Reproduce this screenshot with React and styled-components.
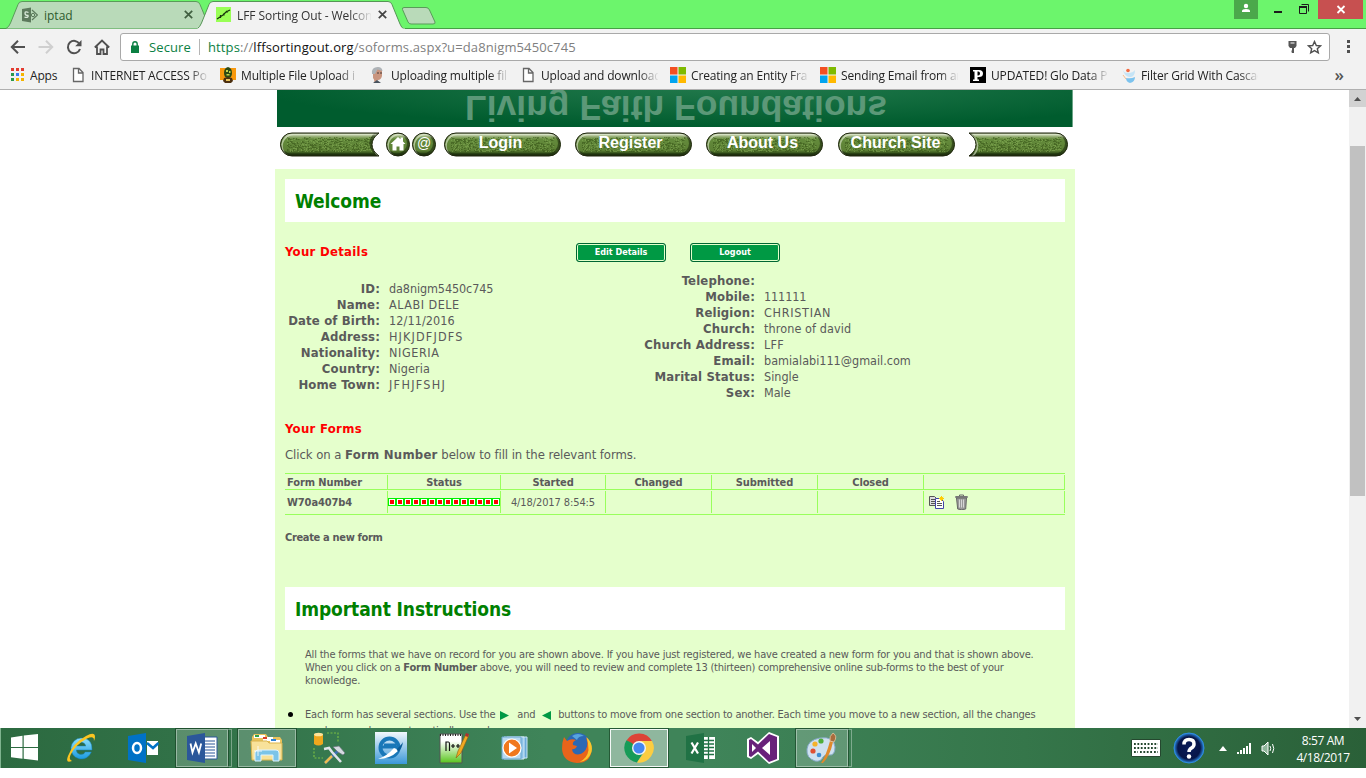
import React from "react";
import styled, { createGlobalStyle, css } from "styled-components";

const Global = createGlobalStyle`
  * { box-sizing: border-box; }
  html, body { margin: 0; padding: 0; background: #fff; overflow: hidden; }
  p, h1, h2 { margin: 0; }
`;

const ui = `"Open Sans", "Noto Sans", sans-serif`;
const tahoma = `"DejaVu Sans Condensed", "DejaVu Sans", sans-serif`;
const verdana = `"DejaVu Sans", sans-serif`;

const Screen = styled.div`
  width: 1366px;
  height: 768px;
  display: flex;
  flex-direction: column;
  overflow: hidden;
`;

/* ---------- browser chrome ---------- */
const TabStrip = styled.div`
  position: relative;
  height: 29px;
  flex: none;
  display: flex;
  background: #6cf56c;
  border-bottom: 1px solid #46a046;
`;
const TabShapes = styled.svg`
  position: absolute;
  left: 0;
  top: 0;
`;
const Tab = styled.div`
  position: relative;
  display: flex;
  align-items: center;
  height: 29px;
  width: ${(p) => p.$w}px;
  padding-left: 22px;
  font: 12px ${ui};
  color: ${(p) => (p.$active ? "#333" : "#2e5a2e")};
`;
const TabTitle = styled.span`
  width: ${(p) => p.$w}px;
  margin: 1px 7px 0 6px;
  letter-spacing: ${(p) => p.$ls || 0}px;
  overflow: hidden;
  white-space: nowrap;
  mask-image: ${(p) => (p.$fade ? "linear-gradient(90deg,#000 84%,transparent 101%)" : "none")};
`;
const WindowControls = styled.div`
  position: relative;
  display: flex;
  margin-left: auto;
  margin-right: 3px;
`;
const WinButton = styled.div`
  height: 19px;
  width: ${(p) => p.$w}px;
  background: ${(p) => p.$bg || "none"};
  svg { display: block; }
`;
const Toolbar = styled.div`
  height: 33px;
  flex: none;
  display: flex;
  align-items: center;
  padding: 3px 7px 0 9px;
  background: #f2f2f2;
`;
const ToolIcon = styled.svg`
  flex: none;
  display: block;
  margin-right: ${(p) => p.$mr || 0}px;
`;
const Omnibox = styled.div`
  width: 1210px;
  height: 28px;
  display: flex;
  align-items: center;
  border: 1px solid #a9a9a9;
  border-radius: 3px;
  background: #fff;
  padding: 0 7px 0 10px;
  font: 13px ${ui};
  color: #808080;
`;
const Secure = styled.span`
  color: #0b8043;
  width: 51px;
  margin-left: 10px;
  border-right: 1px solid #b5b5b5;
  line-height: 16px;
  letter-spacing: 0.1px;
`;
const Url = styled.span`
  margin-left: 8px;
  letter-spacing: 0.12px;
  flex: 1;
  b { font-weight: 400; color: #111; }
  i { font-style: normal; color: #0b8043; }
`;
const Bookmarks = styled.div`
  height: 28px;
  flex: none;
  display: flex;
  align-items: center;
  padding: 0 22px 1px 9px;
  background: #f2f2f2;
  border-bottom: 1px solid #b0b0b0;
  font: 12px ${ui};
  color: #222;
`;
const Bookmark = styled.div`
  display: flex;
  align-items: center;
  width: ${(p) => p.$w || 150}px;
  flex: none;
  svg { flex: none; }
`;
const BookmarkText = styled.span`
  margin-left: 5px;
  width: 117px;
  overflow: hidden;
  white-space: nowrap;
  letter-spacing: -0.16px;
  mask-image: ${(p) => (p.$plain ? "none" : "linear-gradient(90deg,#000 84%,transparent 101%)")};
`;
const More = styled.span`
  margin-left: auto;
  font-size: 17px;
  line-height: 16px;
  font-weight: 600;
  color: #555;
`;

/* ---------- page ---------- */
const Viewport = styled.div`
  height: 638px;
  flex: none;
  display: flex;
  overflow: hidden;
  background: #fff;
`;
const Page = styled.main`
  width: 1349px;
  height: 638px;
  padding-left: 275px;
  overflow: hidden;
  color: #5a5a5a;
`;
const Banner = styled.div`
  width: 796px;
  height: 37px;
  margin-left: 2px;
  overflow: hidden;
  background: radial-gradient(ellipse 60% 110% at 57% -10%, #237a4d, rgba(0,92,46,0)), #005c2e;
  border-right: 1px solid #6ba587;
`;
const Mirrored = styled.div`
  padding-left: 188px;
  font: bold 35.5px/40px "Liberation Sans", Arial, sans-serif;
  white-space: nowrap;
  color: #5c9878;
  transform: translateY(-2px) scaleY(-1);
`;
const Nav = styled.nav`
  display: flex;
  height: 42px;
  padding: 5px 0 0 5px;
`;
const NavItem = styled.div`
  position: relative;
  width: ${(p) => p.$w}px;
  height: 25px;
  margin-right: ${(p) => p.$gap}px;
  text-align: center;
  color: #fff;
  font: bold ${(p) => p.$size || 16}px/21px "Liberation Sans", Arial, sans-serif;
`;
const NavArt = styled.svg`
  position: absolute;
  left: 0;
  top: 0;
`;
const NavLabel = styled.span`
  position: relative;
  left: ${(p) => p.$dx || 0}px;
  top: ${(p) => p.$dy || 0}px;
  font-weight: ${(p) => (p.$light ? 400 : 700)};
`;
const Panel = styled.section`
  width: 800px;
  height: 620px;
  padding: 10px;
  background: #e5ffcc;
`;
const Title = styled.h1`
  height: 43px;
  padding-left: 10px;
  background: #fff;
  color: #008000;
  font: bold 19px/44px ${tahoma};
  letter-spacing: -0.1px;
`;
const DetailHead = styled.div`
  display: flex;
  align-items: center;
  height: 60px;
`;
const SubTitle = styled.h2`
  color: #f00;
  font: bold 13px/16px ${tahoma};
  letter-spacing: 0.3px;
  width: ${(p) => p.$w || "auto"};
`;
const Button = styled.button`
  width: 90px;
  height: 19px;
  margin: 1px 24px 0 0;
  padding: 0;
  border: 1px solid #006633;
  border-radius: 3px;
  background: #009944;
  box-shadow: inset 0 0 0 1px #e5ffcc;
  color: #fff;
  font: bold 9px/17px ${tahoma};
`;
const Details = styled.div`
  display: flex;
  height: 139px;
`;
const Column = styled.dl`
  display: grid;
  grid-template-columns: ${(p) => p.$label}px auto;
  grid-auto-rows: 16px;
  align-content: start;
  column-gap: 9px;
  width: ${(p) => p.$w}px;
  margin: ${(p) => p.$top}px 0 0;
  font: 12.5px/16px ${tahoma};
  white-space: nowrap;
`;
const Term = styled.dt`
  font-weight: bold;
  font-size: 13px;
  text-align: right;
  letter-spacing: 0.15px;
`;
const Value = styled.dd`
  margin: 0;
  letter-spacing: ${(p) => p.$ls || 0}px;
`;
const Intro = styled.p`
  margin-top: 10px;
  font: 13px/16px ${tahoma};
  letter-spacing: -0.07px;
  b { letter-spacing: 0.25px; }
`;
const Table = styled.div`
  margin-top: 10px;
  border-top: 1px solid #99ff5c;
  font: 11px ${tahoma};
`;
const Row = styled.div`
  display: grid;
  grid-template-columns: 103px 113px 105px 106px 106px 106px 141px;
  height: ${(p) => p.$h}px;
  padding: 1px 0;
  border-bottom: 1px solid #99ff5c;
`;
const Cell = styled.div`
  display: flex;
  align-items: center;
  justify-content: ${(p) => (p.$left ? "flex-start" : "center")};
  padding-left: ${(p) => p.$pl || 0}px;
  padding-top: ${(p) => p.$pt || 0}px;
  border-right: 1px solid #99ff5c;
  font-weight: ${(p) => (p.$bold ? "bold" : "normal")};
  white-space: nowrap;
  letter-spacing: -0.1px;
`;
const Pip = styled.i`
  width: 8px;
  height: 8px;
  flex: none;
  border: 1px solid #00f000;
  background: #f00;
  box-shadow: inset 0 0 0 1px #fff;
`;
const CopyIcon = styled.svg`
  margin-right: 10px;
`;
const CreateLink = styled.p`
  margin: 15px 0 42px;
  font: bold 11px/15px ${tahoma};
  letter-spacing: -0.33px;
`;
const Text = styled.p`
  margin: 18px 0 0 20px;
  font: 11px/13px ${tahoma};
  white-space: nowrap;
`;
const Bullets = styled.ul`
  margin: 20px 0 0;
  padding-left: 20px;
  font: 11px/16px ${tahoma};
  white-space: nowrap;
  list-style: none;
  li { position: relative; }
  li::before {
    content: "";
    position: absolute;
    left: -17px;
    top: 5px;
    width: 5px;
    height: 5px;
    border-radius: 50%;
    background: #000;
  }
`;
const Arrow = styled.svg`
  margin: 0 ${(p) => p.$r}px 0 ${(p) => p.$l}px;
  vertical-align: -2px;
`;
const Line = styled.span`
  display: block;
  letter-spacing: ${(p) => p.$ls || 0}px;
`;

const Scrollbar = styled.div`
  width: 17px;
  height: 638px;
  display: flex;
  flex-direction: column;
  background: #f1f1f1;
`;
const ScrollButton = styled.div`
  height: 17px;
  background: ${(p) => (p.$on ? "#d2d2d2" : "#f1f1f1")};
  svg { display: block; }
`;
const Thumb = styled.div`
  margin: 39px 1px auto;
  height: 350px;
  background: #c1c1c1;
`;

/* ---------- taskbar ---------- */
const Taskbar = styled.footer`
  height: 40px;
  flex: none;
  display: flex;
  background: linear-gradient(90deg, #2c6a40 0, #33744a 18%, #3f8459 40%, #3f8459 52%, #35764a 75%, #2a6038 100%);
`;
const frame = css`
  border: 1px solid rgba(255, 255, 255, ${(p) => (p.$frame === "active" ? 0.9 : 0.38)});
  box-shadow: 0 0 0 1px rgba(20, 60, 32, 0.6);
  background: rgba(255, 255, 255, ${(p) => (p.$frame === "active" ? 0.42 : 0.2)});
`;
const Slot = styled.div`
  width: 62px;
  display: flex;
  padding: 1px ${(p) => (p.$stack ? 4 : 2)}px 1px 2px;
`;
const SlotInner = styled.div`
  flex: 1;
  display: flex;
  align-items: center;
  justify-content: center;
  ${(p) => p.$frame && frame}
`;
const Stack = styled.div`
  width: 4px;
  border: 1px solid rgba(255, 255, 255, 0.35);
  border-left: 0;
`;
const Start = styled.div`
  width: 50px;
  padding: 6px 0 0 10px;
  border-left: 1px solid #7fb38f;
`;
const Tray = styled.div`
  margin-left: auto;
  display: flex;
  align-items: center;
`;
const Clock = styled.div`
  width: 74px;
  margin: 1px 6px 0 7px;
  text-align: center;
  color: #fff;
  font: 12px/17px ${ui};
  letter-spacing: -0.4px;
`;

/* ---------- nav pieces ---------- */
const pillPaths = {
  left: "M12 1H99Q92 6 92 12.5T99 24H12A11.5 11.5 0 0 1 12 1Z",
  right: "M87 1H0Q7 6 7 12.5T0 24H87A11.5 11.5 0 0 0 87 1Z",
  full: "M12 1H105A11.5 11.5 0 0 1 105 24H12A11.5 11.5 0 0 1 12 1Z",
  round: "M12 1A11.5 11.5 0 0 1 12 24A11.5 11.5 0 0 1 12 1Z",
};

/* deterministic light and dark grains for the mossy button surface */
function grains(w) {
  const dark = [];
  const light = [];
  let s = 7;
  const next = () => {
    s = (s * 16807) % 2147483647;
    return s / 2147483647;
  };
  for (let y = 5; y < 20; y += 1) {
    for (let x = 7; x < w - 7; x += 1) {
      const r = next();
      if (r < 0.2) dark.push(`M${x} ${y}h1.500v1h-1.500z`);
      else if (r > 0.82) light.push(`M${x} ${y}h1v1h-1z`);
    }
  }
  return [dark.join(""), light.join("")];
}

function PillArt({ kind, w }) {
  const d = pillPaths[kind];
  const id = `clip-${kind}`;
  const [dark, light] = grains(w);
  return (
    <NavArt width={w + 1} height="25" viewBox={`0 0 ${w + 1} 25`}>
      <defs>
        <clipPath id={id}><path d={d} /></clipPath>
        <linearGradient id={`${id}-g`} x1="0" y1="0" x2="0" y2="1">
          <stop offset="0" stopColor="#d5e3bd" />
          <stop offset=".12" stopColor="#a9bc8c" />
          <stop offset=".26" stopColor="#648b3c" />
          <stop offset=".76" stopColor="#5c8034" />
          <stop offset=".88" stopColor="#33501a" />
          <stop offset="1" stopColor="#172409" />
        </linearGradient>
      </defs>
      <path d={d} fill={`url(#${id}-g)`} />
      <g clipPath={`url(#${id})`}>
        {kind !== "round" && (
          <>
            <path d={dark} fill="#304c12" opacity=".5" />
            <path d={light} fill="#8cb45c" opacity=".45" />
          </>
        )}
        <path d={d} fill="none" stroke="#1b2a0c" strokeWidth="3" opacity=".6" transform="translate(-1 -1)" />
        <path d={d} fill="none" stroke="#e6efd8" strokeWidth="1.600" opacity=".6" transform="translate(1.500 1.500)" />
      </g>
      <path d={d} fill="none" stroke="#20270f" />
    </NavArt>
  );
}

/* ---------- bookmark icons ---------- */
const PageIcon = () => (
  <svg width="16" height="16"><path d="M3.500 1.500h5.500l4 4v9H3.500zM8.500 1.500v4.500h4.500" fill="#fff" stroke="#666" strokeWidth="1.300" /></svg>
);
const MsIcon = () => (
  <svg width="16" height="16"><path d="M0 0h7.500v7.500H0z" fill="#f25022" /><path d="M8.500 0H16v7.500H8.500z" fill="#7fba00" /><path d="M0 8.500h7.500V16H0z" fill="#00a4ef" /><path d="M8.500 8.500H16V16H8.500z" fill="#ffb900" /></svg>
);
const AppsIcon = () => (
  <svg width="16" height="16">
    {["#e33b30", "#e33b30", "#e33b30", "#2b9a4c", "#3c7cf0", "#f4b400", "#2b9a4c", "#f4b400", "#f4b400"].map((c, i) => (
      <rect key={i} x={2 + (i % 3) * 5} y={1 + Math.floor(i / 3) * 5} width="3" height="3" fill={c} />
    ))}
  </svg>
);
const GuyIcon = () => (
  <svg width="16" height="16"><path d="M0 1h16v12H0z" fill="#f8980c" /><path d="M8 0q4 1 4 6t-4 5-4-5 4-6z" fill="#2c4a14" /><path d="M6 3h2v2H6zM9 4h1.500v2H9zM6.500 7h3v1.500h-3z" fill="#c3d44c" /><path d="M4 11l4-1 4 1 1 3-2 2H5l-2-2z" fill="#4d3010" /><path d="M6 12h4v2H6z" fill="#e9c35b" /></svg>
);
const FaceIcon = () => (
  <svg width="16" height="16"><path d="M3 3q5-5 9 0v6q-1 4-4 4l-4 3q1-3-1-5z" fill="#c9957f" /><path d="M2 7q-1-7 6-7 4 0 4.500 4l-5-1.500L5 7z" fill="#aeb3b7" /><path d="M3 16l4-3 4 3z" fill="#49545f" /><path d="M7 6h2M10 6h2" stroke="#4b3a36" /></svg>
);
const PIcon = () => (
  <svg width="16" height="16"><path d="M0 0h16v16H0z" fill="#000" /><path d="M3 3h6q4 0 4 3.500T9 10H7.500v2.500H9V14H3v-1.500h1.500v-8H3zM7.500 4.500v4q2.500.5 2.500-2t-2.500-2z" fill="#fff" /></svg>
);
const BirdIcon = () => (
  <svg width="16" height="16"><path d="M2 1q1 5 6 5t7-3q0 6-4 7-6 1-9-9z" fill="#c5e4f6" /><path d="M6 11q5 1 9-1 0 5-5 6-4-1-4-5z" fill="#7cc3ee" /><circle cx="8" cy="3.500" r="1.800" fill="#f26a42" /><path d="M3 8l3 4" stroke="#f5bd8f" /></svg>
);
const bookmarks = [
  [PageIcon, "INTERNET ACCESS Po"],
  [GuyIcon, "Multiple File Upload i"],
  [FaceIcon, "Uploading multiple fil"],
  [PageIcon, "Upload and download"],
  [MsIcon, "Creating an Entity Fra"],
  [MsIcon, "Sending Email from ar"],
  [PIcon, "UPDATED! Glo Data P"],
  [BirdIcon, "Filter Grid With Cascad"],
];

/* ---------- taskbar icons ---------- */
const IeIcon = () => (
  <svg width="32" height="32" viewBox="0 0 32 32">
    <defs><linearGradient id="ie" x2="0" y2="1"><stop stopColor="#8fe0fb" /><stop offset="1" stopColor="#1c9be0" /></linearGradient></defs>
    <path d="M16 6a10.500 10.500 0 1 0 10.300 14h-6a4.800 4.800 0 0 1-9-2H27q.5-12-11-12zm-4.700 8a4.900 4.900 0 0 1 9.500 0z" fill="url(#ie)" stroke="#1580bd" strokeWidth=".5" />
    <path d="M7 29q-7 3-4-5Q8 11 21 4q9-5 9 1 0 2-1.200 4.500Q30 3 22 6.500 10 13 5.500 23q-2 5 1.500 6z" fill="#fcc521" />
  </svg>
);
const OutlookIcon = () => (
  <svg width="32" height="32" viewBox="0 0 32 32"><path d="M1 4l18-3v30L1 28z" fill="#0072c6" /><path d="M20 9h11v14H20z" fill="#fff" /><path d="M20 11l6 5 5.500-5" fill="none" stroke="#0072c6" strokeWidth="2.500" /><ellipse cx="10" cy="16" rx="4" ry="5" fill="none" stroke="#fff" strokeWidth="2.500" /></svg>
);
const WordIcon = () => (
  <svg width="32" height="32" viewBox="0 0 32 32"><path d="M17 5h14v22H17z" fill="#fff" stroke="#2b579a" /><path d="M19 9h10M19 12h10M19 15h10M19 18h10M19 21h10M19 24h10" stroke="#2b579a" strokeWidth="1.200" /><path d="M1 4l18-3v30L1 28z" fill="#2b579a" /><path d="M4.500 11.500l2 9 3.200-9 3.200 9 2.300-9" fill="none" stroke="#fff" strokeWidth="1.800" /></svg>
);
const FolderIcon = () => (
  <svg width="34" height="32" viewBox="0 0 34 32"><path d="M2 5l2-3h12l2 3h12l2 3v19H2z" fill="#e9c25c" /><path d="M4 3h11v3H4z" fill="#fff" /><path d="M5 3h4v2H5z" fill="#30a34a" /><path d="M13 5h10v4H13z" fill="#fff" /><path d="M13 5h4v2h-4z" fill="#d9402b" /><path d="M20 8h10v3H20z" fill="#fff" /><path d="M21 7h5v2h-5z" fill="#2d82d6" /><path d="M1 9h16l2 2h13v17H2z" fill="#f8e29a" stroke="#d9b44d" /><path d="M5 29v-8q0-3 3-3h18q3 0 3 3v8h-6v-6H11v6z" fill="#7cc4e8" stroke="#dff4ff" /><path d="M8 14v10M4 19h8" stroke="#fff" opacity=".8" /></svg>
);
const ToolsIcon = () => (
  <svg width="32" height="32" viewBox="0 0 32 32"><path d="M1 2h9v10q-4.500 3-9 0z" fill="#efa71d" /><ellipse cx="5.500" cy="2.500" rx="4.500" ry="1.800" fill="#ffe49a" /><path d="M14 1h11v10M1 16v10h9" fill="none" stroke="#78bd44" strokeWidth="1.200" strokeDasharray="2 1.500" /><path d="M12 31L26 18" stroke="#3c6fae" strokeWidth="3" /><path d="M12 31l7-7" stroke="#edbd50" strokeWidth="2.500" /><path d="M11 17l5-1 3 4 9 10" fill="none" stroke="#dfe3ea" strokeWidth="2.600" /><path d="M20 15l6-1 6 7-2 2-5-3z" fill="#d6dae1" stroke="#6d7480" strokeWidth=".7" /></svg>
);
const BlueIeIcon = () => (
  <svg width="32" height="32" viewBox="0 0 32 32"><defs><linearGradient id="bie" x2="0" y2="1"><stop stopColor="#f2f8fd" /><stop offset="1" stopColor="#3a97d8" /></linearGradient></defs><path d="M0 0h32v32H0z" fill="url(#bie)" /><circle cx="14.500" cy="15.500" r="9" fill="none" stroke="#1977b8" strokeWidth="4" /><path d="M7 15h17M9 13h12" stroke="#1977b8" strokeWidth="3" /><path d="M3 27q9-3 16-11 3 1 4 3-8 8-20 8z" fill="#fff" /><path d="M22 17q5-5 6-7-1 7-5 10z" fill="#0b5c97" /></svg>
);
const NppIcon = () => (
  <svg width="32" height="32" viewBox="0 0 32 32"><defs><linearGradient id="npp" x2="0" y2="1"><stop offset=".25" stopColor="#fff" /><stop offset="1" stopColor="#58c51c" /></linearGradient></defs><path d="M3 2h22v29H3z" fill="url(#npp)" stroke="#555" /><path d="M3 3h22" stroke="#222" strokeWidth="2" strokeDasharray="1 1.500" /><path d="M9 19v-9h2.500q1 0 1 2v7M14 14h4M16 12v4M19 14h4M21 12v4" fill="none" stroke="#111" strokeWidth="1.200" /><path d="M19 26l2-7 8-17 3 1-8 18z" fill="#f0a922" stroke="#8c5c12" strokeWidth=".6" /><path d="M29 1l3 1-1 3-3-1z" fill="#a73333" /></svg>
);
const MediaIcon = () => (
  <svg width="28" height="28" viewBox="0 0 28 28"><path d="M6 3h20v21H6z" fill="#69a9d8" stroke="#cbe6f7" /><path d="M3 3h20v22H3z" fill="#8fc3e8" stroke="#d3eaf8" /><path d="M1 3h19v22H1z" fill="#b8d9f0" stroke="#6aa7d0" /><circle cx="11" cy="14" r="9" fill="#f0781e" stroke="#fff" strokeWidth="1.200" /><path d="M8 8.500l8 5.500-8 5.500z" fill="#fff" /></svg>
);
const FirefoxIcon = () => (
  <svg width="32" height="32" viewBox="0 0 32 32"><circle cx="17" cy="13.500" r="12.500" fill="#2c68b4" /><path d="M11 4q6-4 12 0-6 0-7 4z" fill="#57a4de" /><path d="M3 5l3 4q4-3 9-1-4 2-3 5l4 1q-1 3-5 3.500 1 5 6 5 7-1 9-8 1-5-1-9 5 4 5.500 12Q30 31 16 31 2 30 1 17 1 10 3 5z" fill="#e8641b" /><path d="M25.500 5q7 7 5 15-3 9-12 10 8-4 9-12 0-7-2-13z" fill="#fbc42b" /></svg>
);
const ChromeIcon = () => (
  <svg width="30" height="30" viewBox="0 0 30 30"><path d="M15 15L2.500 7.500A14.700 14.700 0 0 1 28 8.200L15 8z" fill="#dc4437" /><path d="M15 15L2.300 7.500A14.700 14.700 0 0 0 13 29.500l6-9.500z" fill="#179b57" /><path d="M15 8h13a14.700 14.700 0 0 1-15 21.500L21 18z" fill="#fccd41" /><path d="M9 18L2.400 7.300l6 3z" fill="#179b57" /><circle cx="15" cy="15" r="7" fill="#f4f4f4" /><circle cx="15" cy="15" r="5.600" fill="#4587f0" /></svg>
);
const ExcelIcon = () => (
  <svg width="32" height="32" viewBox="0 0 32 32"><path d="M17 5h13v22H17z" fill="#fff" /><path d="M18 8.500h11M18 12h11M18 15.500h11M18 19h11M18 22.500h11M23.500 5v22" stroke="#207245" strokeWidth="1.300" /><path d="M1 4l18-3v30L1 28z" fill="#207245" /><path d="M6.500 10.500l6.500 11M13 10.500l-6.500 11" stroke="#fff" strokeWidth="2.200" /></svg>
);
const VsIcon = () => (
  <svg width="32" height="32" viewBox="0 0 32 32"><path d="M22 0l10 4v24l-10 4-11-10-7 5-4-2V7l4-2 7 5z" fill="#fff" /><path d="M22 2l8 3v22l-8 3-11-10.500L4 25l-2-1V8l2-1 7 5.500z" fill="#68217a" /><path d="M23 9v14l-8-7zM5 12v8l4-4z" fill="#fff" /></svg>
);
const PaintIcon = () => (
  <svg width="32" height="32" viewBox="0 0 32 32"><path d="M14 6q14-2 15 9 0 9-6 8-4-1-6 2-2 5-8 4-9-3-8-12Q2 8 14 6z" fill="#cfe1f0" stroke="#86a9c8" /><circle cx="7" cy="19" r="2.600" fill="#e05032" /><circle cx="9" cy="12" r="2.600" fill="#f5b22b" /><circle cx="15" cy="9" r="2.600" fill="#4fae3c" /><circle cx="13" cy="23" r="2.300" fill="#3f8ed2" /><path d="M15 31Q20 24 24 9l3 1q-3 14-10 21z" fill="#e08a2c" /><path d="M24 9q-1-5 3-8 5 3 1 9z" fill="#a86c3d" stroke="#f0d3aa" strokeWidth=".7" /></svg>
);
const tasks = [
  [IeIcon], [OutlookIcon], [WordIcon, "open", true], [FolderIcon, "open"], [ToolsIcon], [BlueIeIcon],
  [NppIcon], [MediaIcon], [FirefoxIcon], [ChromeIcon, "active"], [ExcelIcon], [VsIcon], [PaintIcon, "open", true],
];

const leftDetails = [
  ["ID:", "da8nigm5450c745", -0.1], ["Name:", "ALABI DELE", 0.5], ["Date of Birth:", "12/11/2016", 0.1], ["Address:", "HJKJDFJDFS", 1.15],
  ["Nationality:", "NIGERIA", 0.6], ["Country:", "Nigeria", 0.1], ["Home Town:", "JFHJFSHJ", 1.3],
];
const rightDetails = [
  ["Telephone:", ""], ["Mobile:", "111111", -0.1], ["Religion:", "CHRISTIAN", 0.7], ["Church:", "throne of david", 0.1],
  ["Church Address:", "LFF", 0.2], ["Email:", "bamialabi111@gmail.com"], ["Marital Status:", "Single"], ["Sex:", "Male"],
];

function DetailColumn({ rows, ...rest }) {
  return (
    <Column {...rest}>
      {rows.map(([k, v, ls]) => (
        <React.Fragment key={k}>
          <Term>{k}</Term>
          <Value $ls={ls}>{v}</Value>
        </React.Fragment>
      ))}
    </Column>
  );
}

function Chrome() {
  return (
    <>
      <TabStrip>
        <TabShapes width="450" height="29">
          <path d="M6 28.500Q9 27 10.500 23L18 4.500Q19 1.500 22 1.500H196Q199 1.500 200 4.500L210 28.500" fill="#b9dab9" stroke="#599b59" />
          <path d="M197 29Q200 27 201.500 23L209 4.500Q210 1.500 213 1.500H388Q391 1.500 392 4.500L400 24Q401.500 28 404 29" fill="#f2f2f2" stroke="#569656" />
          <path d="M197 29H405" stroke="#f2f2f2" />
          <path d="M404 7.500H426Q428.500 7.500 429.500 10L435 22Q435.500 24 433 24H411Q409 24 408 22L402.500 9.500Q402 7.500 404 7.500Z" fill="#b9dab9" stroke="#599b59" />
        </TabShapes>
        <Tab $w={194}>
          <svg width="16" height="16"><path d="M0 2l9-1.500v15L0 14z" fill="#5c7a5c" /><path d="M6.500 5.500Q3 4 3 6.200t3 2.300q1 2.500-3.500 1.600" fill="none" stroke="#d9e9d9" strokeWidth="1.300" /><path d="M10 3l5.500 5-5.500 5" fill="none" stroke="#5c7a5c" strokeWidth="1.200" /><circle cx="11" cy="8" r="1.700" fill="none" stroke="#5c7a5c" /></svg>
          <TabTitle $w={133}>iptad</TabTitle>
          <svg width="9" height="9"><path d="M.8.8l7.400 7.400M8.200.8L.8 8.200" stroke="#405f40" strokeWidth="1.700" /></svg>
        </Tab>
        <Tab $w={200} $active>
          <svg width="15" height="15"><path d="M0 0h15v15H0z" fill="#99ff55" /><path d="M1 12l3-2 3-2 3-3 4-2M4.500 8v3M8 6v2.500M10 4l1.500 1.500" fill="none" stroke="#17330c" strokeWidth="1.200" /></svg>
          <TabTitle $w={134} $fade $ls={-0.07}>LFF Sorting Out - Welcon</TabTitle>
          <svg width="9" height="9"><path d="M.8.8l7.400 7.400M8.200.8L.8 8.200" stroke="#444" strokeWidth="1.700" /></svg>
        </Tab>
        <WindowControls>
          <WinButton $w={24} $bg="#4ba84b"><svg width="24" height="19"><circle cx="12" cy="6" r="2.200" fill="#fff" /><path d="M8 12V11Q8 9 12 9T16 11V12z" fill="#fff" /></svg></WinButton>
          <WinButton $w={60}><svg width="60" height="19"><path d="M16 12h8" stroke="#1b1b1b" strokeWidth="2" /><path d="M41.500 6.500h7v7h-7zM43.500 4.500h7v7" fill="none" stroke="#1b1b1b" /><path d="M41 7h8" stroke="#1b1b1b" strokeWidth="2" /></svg></WinButton>
          <WinButton $w={45} $bg="#c75050"><svg width="45" height="19"><path d="M19.500 6l7 7M26.500 6l-7 7" stroke="#fff" strokeWidth="1.800" /></svg></WinButton>
        </WindowControls>
      </TabStrip>
      <Toolbar>
        <ToolIcon width="18" height="18" $mr={10}><path d="M16 9H3M9 2.800L2.800 9 9 15.200" fill="none" stroke="#505050" strokeWidth="2" /></ToolIcon>
        <ToolIcon width="18" height="18" $mr={10}><path d="M1.500 9h13M9 2.800L15.200 9 9 15.200" fill="none" stroke="#cfcfcf" strokeWidth="2" /></ToolIcon>
        <ToolIcon width="18" height="18" $mr={10}><path d="M14.500 6A6.200 6.200 0 1 0 15 11" fill="none" stroke="#505050" strokeWidth="2" /><path d="M16.500 2v6.300h-6.300z" fill="#505050" /></ToolIcon>
        <ToolIcon width="18" height="18" $mr={9}><path d="M1.800 9.500L9 2.500l7.200 7M4 8.500V16h3.500v-4.500h3V16H14V8.500" fill="none" stroke="#505050" strokeWidth="1.800" /></ToolIcon>
        <Omnibox>
          <svg width="8" height="12"><path d="M0 4.500h8V12H0z" fill="#0b8043" /><path d="M1.800 5V3q0-2.200 2.200-2.200T6.200 3v2" fill="none" stroke="#0b8043" strokeWidth="1.400" /></svg>
          <Secure>Secure</Secure>
          <Url><i>https</i>://<b>lffsortingout.org</b>/soforms.aspx?u=da8nigm5450c745</Url>
          <ToolIcon width="9" height="14" $mr={10}><path d="M.5 1h8v5l-1.500 2H2L.5 6z" fill="#555" /><path d="M2.500 3h4" stroke="#fff" /><path d="M5 8v5M3.500 11.500H5" stroke="#555" strokeWidth="2" /></ToolIcon>
          <ToolIcon width="15" height="15" viewBox="0 0 15 15"><path d="M7.500 1.500l1.800 4 4.200.4-3.200 2.800 1 4.200-3.800-2.300-3.800 2.300 1-4.200L1.500 5.900l4.200-.4z" fill="none" stroke="#505050" strokeWidth="1.400" /></ToolIcon>
        </Omnibox>
        <ToolIcon width="20" height="14"><path d="M17 0h3v3h-3zM17 5h3v3h-3zM17 10h3v3h-3z" fill="#505050" /></ToolIcon>
      </Toolbar>
      <Bookmarks>
        <Bookmark $w={61}><AppsIcon /><BookmarkText $plain>Apps</BookmarkText></Bookmark>
        {bookmarks.map(([Icon, label], i) => (
          <Bookmark key={i}><Icon /><BookmarkText>{label}</BookmarkText></Bookmark>
        ))}
        <More>»</More>
      </Bookmarks>
    </>
  );
}

function Website() {
  return (
    <Page>
      <Banner><Mirrored>Living Faith Foundations</Mirrored></Banner>
      <Nav>
        <NavItem $w={99} $gap={7}><PillArt kind="left" w={99} /></NavItem>
        <NavItem $w={24} $gap={2}><PillArt kind="round" w={24} /><NavArt width="24" height="25"><path d="M4.500 12L12 5l2.500 2.300V5.500h2.500v4l2.500 2.500H17.500v6.500h-4v-4h-3v4h-4V12z" fill="#fff" /></NavArt></NavItem>
        <NavItem $w={24} $gap={8} $size={14}><PillArt kind="round" w={24} /><NavLabel $dy={1} $light>@</NavLabel></NavItem>
        <NavItem $w={117} $gap={14}><PillArt kind="full" w={117} /><NavLabel $dx={-2}>Login</NavLabel></NavItem>
        <NavItem $w={117} $gap={14}><PillArt kind="full" w={117} /><NavLabel $dx={-3}>Register</NavLabel></NavItem>
        <NavItem $w={117} $gap={15}><PillArt kind="full" w={117} /><NavLabel $dx={-2}>About Us</NavLabel></NavItem>
        <NavItem $w={117} $gap={14}><PillArt kind="full" w={117} /><NavLabel $dx={-1}>Church Site</NavLabel></NavItem>
        <NavItem $w={99} $gap={0}><PillArt kind="right" w={99} /></NavItem>
      </Nav>
      <Panel>
        <Title>Welcome</Title>
        <DetailHead>
          <SubTitle $w="291px">Your Details</SubTitle>
          <Button>Edit Details</Button>
          <Button>Logout</Button>
        </DetailHead>
        <Details>
          <DetailColumn rows={leftDetails} $label={95} $w={355} $top={-1} />
          <DetailColumn rows={rightDetails} $label={115} $w={425} $top={-9} />
        </Details>
        <SubTitle>Your Forms</SubTitle>
        <Intro>Click on a <b>Form Number</b> below to fill in the relevant forms.</Intro>
        <Table>
          <Row $h={16}>
            <Cell $left $pl={2} $pt={1} $bold>Form Number</Cell>
            <Cell $pt={1} $bold>Status</Cell>
            <Cell $pt={1} $bold>Started</Cell>
            <Cell $pt={1} $bold>Changed</Cell>
            <Cell $pt={1} $bold>Submitted</Cell>
            <Cell $pt={1} $bold>Closed</Cell>
            <Cell />
          </Row>
          <Row $h={25}>
            <Cell $left $pl={2} $bold>W70a407b4</Cell>
            <Cell>{Array.from({ length: 14 }, (_, i) => <Pip key={i} />)}</Cell>
            <Cell>4/18/2017 8:54:5</Cell>
            <Cell />
            <Cell />
            <Cell />
            <Cell $left $pl={5}>
              <CopyIcon width="16" height="16"><path d="M.5 2.500h5l2 2v7h-7z" fill="#ddd" stroke="#555" /><path d="M2 5.500h4M2 7.500h4M2 9.500h4" stroke="#555" /><path d="M6.500 4.500h5l3 3v7h-8z" fill="#fff" stroke="#4444a8" /><path d="M8 9.500h5M8 11.500h5M8 7.500h3" stroke="#555" /><path d="M12.500 2v5M10 4.500h5M10.800 2.800l3.500 3.500M14.300 2.800l-3.500 3.500" stroke="#fc0" /></CopyIcon>
              <svg width="14" height="16"><path d="M1.500 4h10l-.8 11q-4 1.500-8 0z" fill="#999" stroke="#666" /><path d="M4.500 5.500v8M6.500 5.500v8M8.500 5.500v8" stroke="#d6d6d6" /><path d="M.3 3h12.400" stroke="#777" strokeWidth="2" /><path d="M4.500 2V1h4v1" fill="none" stroke="#666" /></svg>
            </Cell>
          </Row>
        </Table>
        <CreateLink>Create a new form</CreateLink>
        <Title>Important Instructions</Title>
        <Text>
          <Line $ls={-0.185}>All the forms that we have on record for you are shown above. If you have just registered, we have created a new form for you and that is shown above.</Line>
          <Line $ls={-0.225}>When you click on a <b>Form Number</b> above, you will need to review and complete 13 (thirteen) comprehensive online sub-forms to the best of your</Line>
          <Line $ls={-0.15}>knowledge.</Line>
        </Text>
        <Bullets>
          <li>
            <Line $ls={-0.2}>
              Each form has several sections. Use the
              <Arrow width="10" height="10" $l={4} $r={5}><path d="M1 1l9 4.500L1 10z" fill="#009944" /></Arrow>
              {" and "}
              <Arrow width="10" height="10" $l={4} $r={3}><path d="M9 1L0 5.500 9 10z" fill="#009944" /></Arrow>
              {" buttons to move from one section to another. Each time you move to a new section, all the changes"}
            </Line>
            <Line $ls={-0.4}>you have made are automatically saved.</Line>
          </li>
        </Bullets>
      </Panel>
    </Page>
  );
}

export default function App() {
  return (
    <Screen>
      <Global />
      <Chrome />
      <Viewport>
        <Website />
        <Scrollbar>
          <ScrollButton $on><svg width="17" height="17"><path d="M5 11l3.500-4 3.500 4z" fill="#505050" /></svg></ScrollButton>
          <Thumb />
          <ScrollButton><svg width="17" height="17"><path d="M5 6l3.500 4L12 6z" fill="#505050" /></svg></ScrollButton>
        </Scrollbar>
      </Viewport>
      <Taskbar>
        <Start><svg width="27" height="27"><path d="M0 3.500l11.500-1.700V13H0zM12.700 1.600L27 0v13H12.700zM0 14h11.500v10.800L0 23.200zM12.700 14H27v12.500l-14.300-1.700z" fill="#fff" /></svg></Start>
        {tasks.map(([Icon, f, stack], i) => (
          <Slot key={i} $stack={stack}>
            <SlotInner $frame={f}><Icon /></SlotInner>
            {stack && <Stack />}
          </Slot>
        ))}
        <Tray>
          <svg width="30" height="18"><path d="M.5.500h29v17H.500z" fill="#fff" stroke="#25482f" /><path d="M3 5h24M3 9h24M3 13h4M9 13h12M23 13h4" stroke="#25482f" strokeWidth="2" strokeDasharray="1.800 1.600" /></svg>
          <svg width="58" height="34"><defs><radialGradient id="q"><stop stopColor="#0b1c5a" /><stop offset=".75" stopColor="#071548" /><stop offset="1" stopColor="#2b87dc" /></radialGradient></defs><circle cx="28" cy="17" r="15" fill="url(#q)" stroke="#2f8be0" /><path d="M23 13.500q0-5 5-5t5 4.500q0 2.500-2.500 4T28 21" fill="none" stroke="#fff" strokeWidth="3.500" /><circle cx="28" cy="25.500" r="2.200" fill="#fff" /></svg>
          <svg width="60" height="20"><path d="M0 13l4-5 4 5z" fill="#fff" /><path d="M19 16v-2M22 16v-4M25 16v-6M28 16V8M31 16V5" stroke="#fff" strokeWidth="2" /><path d="M43 8h2l4-4v13l-4-4h-2z" fill="#8fb79b" stroke="#fff" /><path d="M51 8q1.500 2.500 0 5M53.500 6q2.500 4.500 0 9" fill="none" stroke="#fff" /></svg>
          <Clock>8:57 AM<br />4/18/2017</Clock>
        </Tray>
      </Taskbar>
    </Screen>
  );
}
